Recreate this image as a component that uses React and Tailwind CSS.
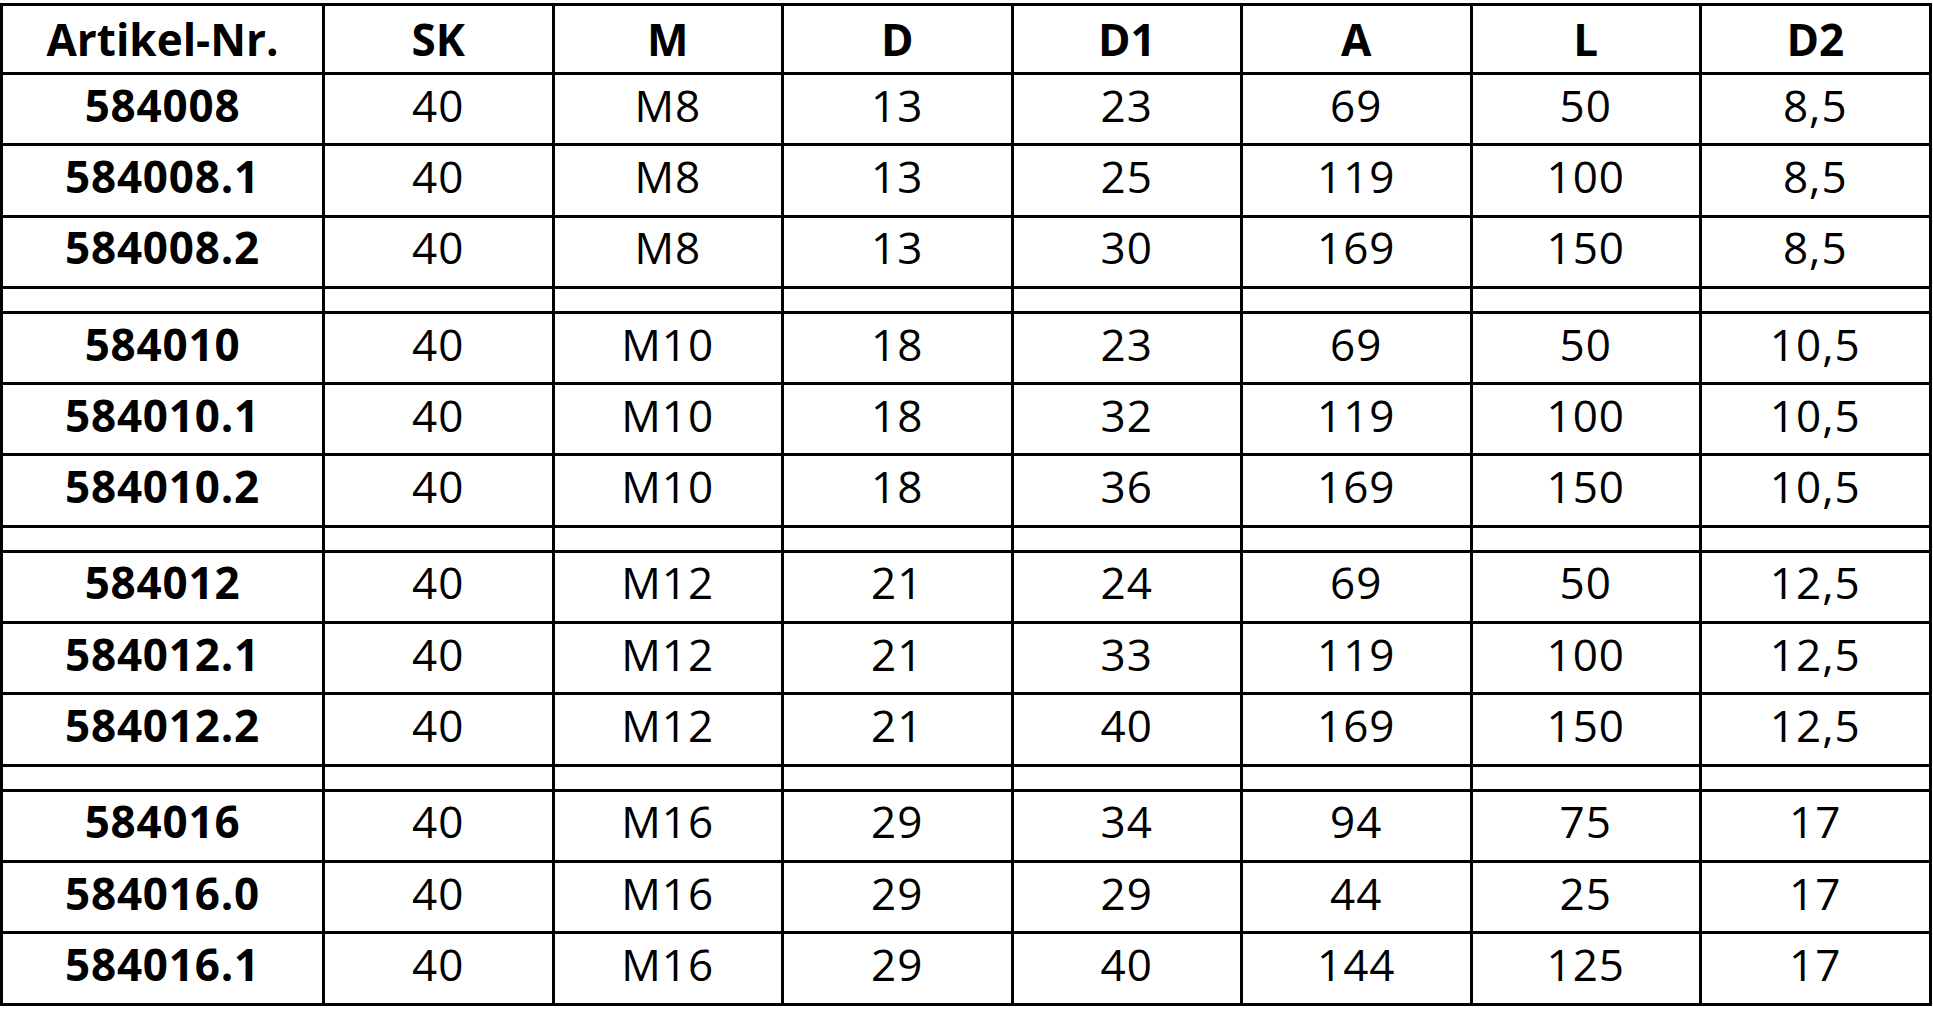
import React from 'react';

const headers = ['Artikel-Nr.', 'SK', 'M', 'D', 'D1', 'A', 'L', 'D2'];

const groups = [
  [
    ['584008', '40', 'M8', '13', '23', '69', '50', '8,5'],
    ['584008.1', '40', 'M8', '13', '25', '119', '100', '8,5'],
    ['584008.2', '40', 'M8', '13', '30', '169', '150', '8,5'],
  ],
  [
    ['584010', '40', 'M10', '18', '23', '69', '50', '10,5'],
    ['584010.1', '40', 'M10', '18', '32', '119', '100', '10,5'],
    ['584010.2', '40', 'M10', '18', '36', '169', '150', '10,5'],
  ],
  [
    ['584012', '40', 'M12', '21', '24', '69', '50', '12,5'],
    ['584012.1', '40', 'M12', '21', '33', '119', '100', '12,5'],
    ['584012.2', '40', 'M12', '21', '40', '169', '150', '12,5'],
  ],
  [
    ['584016', '40', 'M16', '29', '34', '94', '75', '17'],
    ['584016.0', '40', 'M16', '29', '29', '44', '25', '17'],
    ['584016.1', '40', 'M16', '29', '40', '144', '125', '17'],
  ],
];

function DataRow({ row }) {
  return (
    <tr className="h-[71.3px]">
      {row.map((cell, i) => (
        <td
          key={i}
          className={`border-[3px] border-black text-center align-middle pb-[9px] p-0 ${i === 0 ? 'font-bold tracking-[0.8px]' : 'font-normal tracking-[1px]'}`}
        >
          {cell}
        </td>
      ))}
    </tr>
  );
}

function SpacerRow() {
  return (
    <tr className="h-[25px]">
      {headers.map((h) => (
        <td key={h} className="border-[3px] border-black p-0" />
      ))}
    </tr>
  );
}

export default function App() {
  return (
    <div className="bg-white min-h-screen w-full overflow-hidden pt-[3px]">
      <table
        className="table-fixed border-collapse text-black text-[44px] leading-none w-[1929px]"
        style={{ fontFamily: '"Open Sans", "Noto Sans", sans-serif' }}
      >
        <colgroup>
          <col className="w-[322px]" />
          <col className="w-[229.5px]" />
          <col className="w-[229.5px]" />
          <col className="w-[229.5px]" />
          <col className="w-[229.5px]" />
          <col className="w-[229.5px]" />
          <col className="w-[229.5px]" />
          <col className="w-[229.5px]" />
        </colgroup>
        <thead>
          <tr className="h-[69px]">
            {headers.map((h) => (
              <th key={h} className="border-[3px] border-black text-center align-middle font-bold p-0 text-[44px]">
                {h}
              </th>
            ))}
          </tr>
        </thead>
        <tbody>
          {groups.map((g, gi) => (
            <React.Fragment key={gi}>
              {gi > 0 && <SpacerRow />}
              {g.map((row) => (
                <DataRow key={row[0]} row={row} />
              ))}
            </React.Fragment>
          ))}
        </tbody>
      </table>
    </div>
  );
}
